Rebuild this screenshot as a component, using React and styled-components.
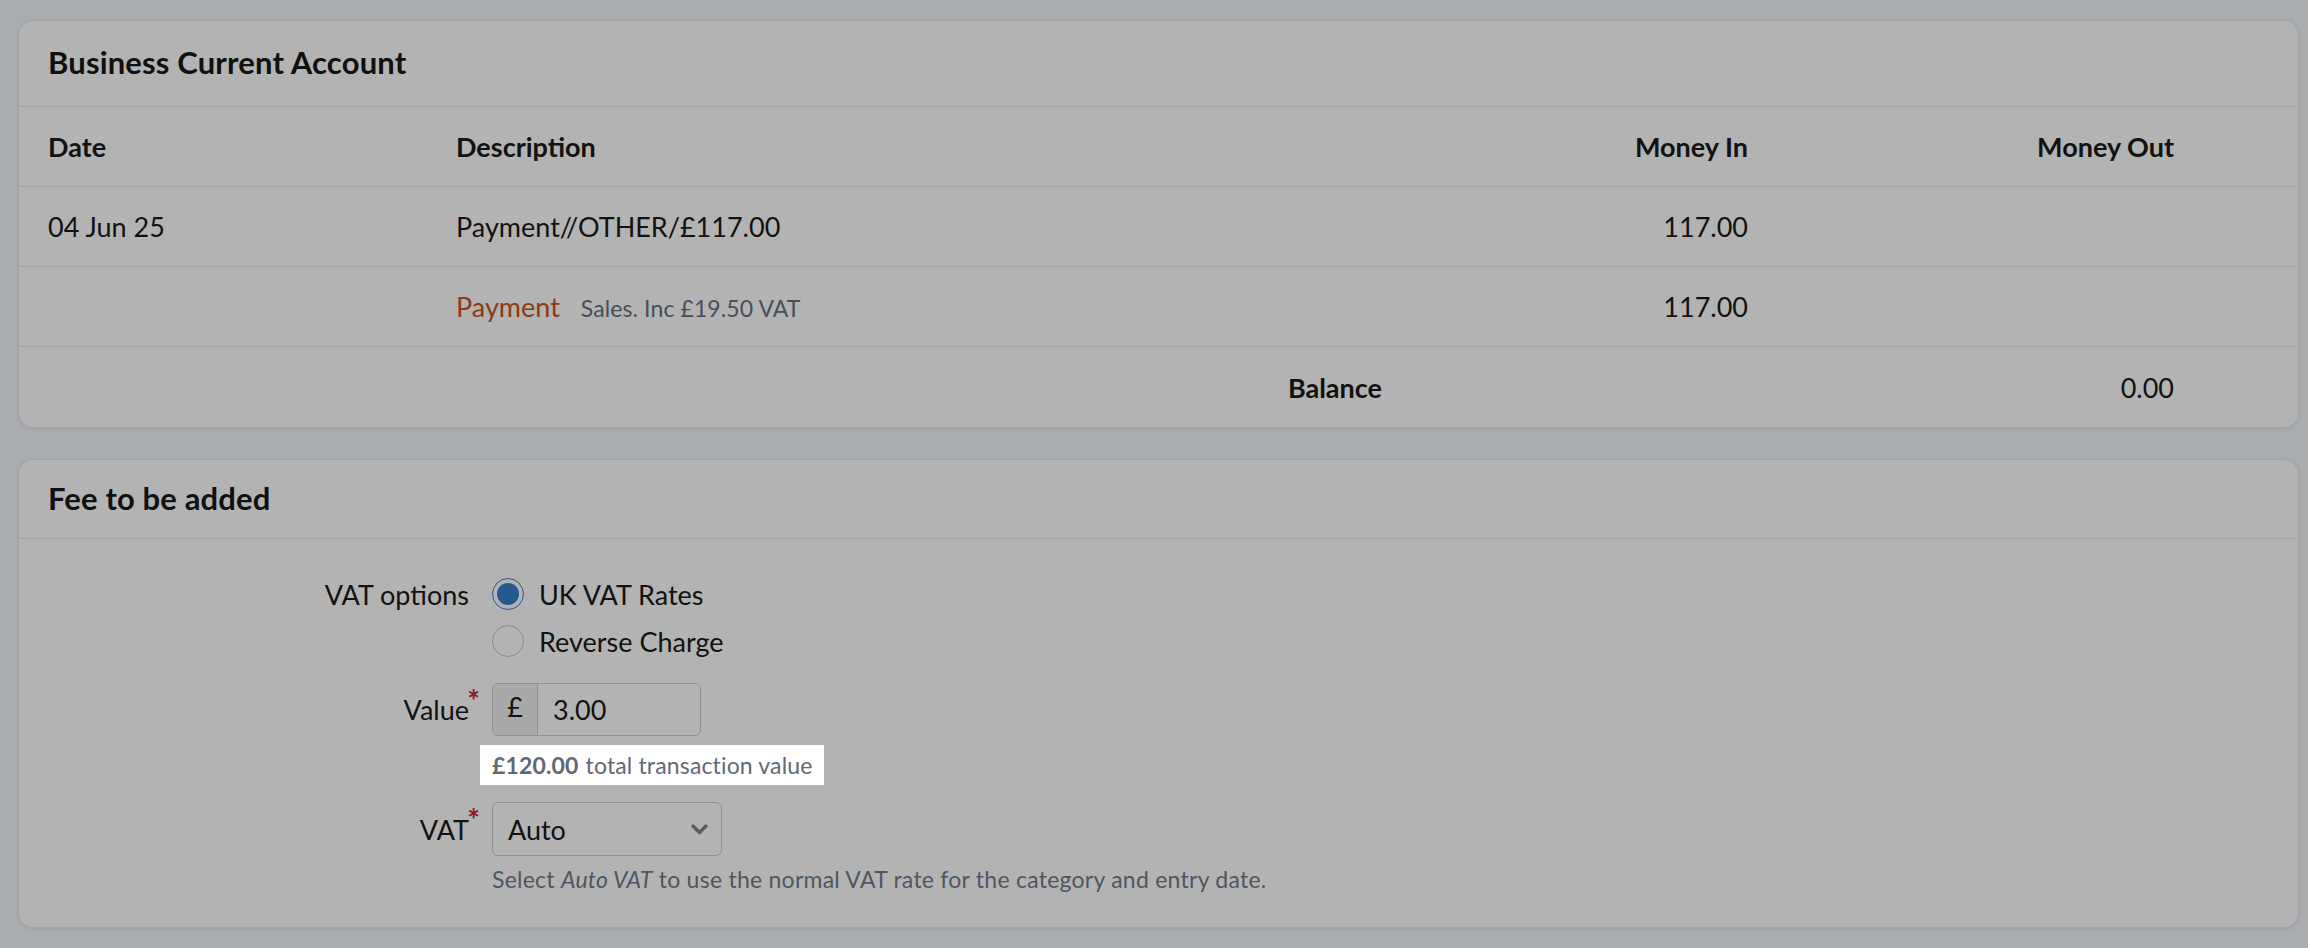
import React from "react";
import styled, { createGlobalStyle } from "styled-components";

const GlobalStyle = createGlobalStyle`
  * { box-sizing: border-box; }
  html, body { margin: 0; padding: 0; }
  body {
    background: #a9acb1;
    font-family: Lato, "Noto Sans", sans-serif;
    color: #121212;
    -webkit-font-smoothing: antialiased;
  }
`;

const Page = styled.div`
  padding: 20px 9px 20px 18px;
  display: flex;
  flex-direction: column;
  gap: 31px;
`;

const Card = styled.section`
  background: #b3b3b3;
  border: 1px solid #a4a5a7;
  border-radius: 15px;
  box-shadow: 0 1px 4px rgba(60, 64, 72, 0.12);
  overflow: hidden;
`;

const CardHeader = styled.header`
  height: ${(p) => p.$h}px;
  display: flex;
  align-items: center;
  padding: 0 29px ${(p) => p.$lift || 0}px 29px;
  border-bottom: 1px solid #a3a3a3;
`;

const CardTitle = styled.h2`
  margin: 0;
  font-size: 31px;
  font-weight: 700;
  color: #101010;
  letter-spacing: 0.15px;
`;

const Table = styled.div`
  display: grid;
  grid-template-columns: 408px 926px 366px 426px 1fr;
  padding-left: 29px;
`;

const Cell = styled.div`
  height: 80px;
  display: flex;
  align-items: center;
  justify-content: ${(p) => (p.$right ? "flex-end" : "flex-start")};
  font-size: 27px;
  font-weight: ${(p) => (p.$bold ? 700 : 400)};
  color: #121212;
  white-space: nowrap;
  border-bottom: ${(p) => (p.$last ? "none" : "1px solid #a3a3a3")};
  margin-left: ${(p) => (p.$first ? "-29px" : "0")};
  padding-left: ${(p) => (p.$first ? "29px" : "0")};
`;

const Line = styled.span`
  display: inline-flex;
  align-items: baseline;
`;

const LinkText = styled.span`
  color: #8a3c12;
  font-size: 27px;
`;

const Meta = styled.span`
  color: #47505a;
  font-size: 23px;
  letter-spacing: 0.1px;
  margin-left: 21px;
`;

const FormBody = styled.div`
  padding: 39px 0 33px 0;
  display: flex;
  flex-direction: column;
`;

const FormRow = styled.div`
  display: grid;
  grid-template-columns: 461px 1fr;
  column-gap: 12px;
  align-items: start;
  margin-top: ${(p) => p.$above || 0}px;
`;

const Label = styled.div`
  position: relative;
  height: ${(p) => p.$h}px;
  display: flex;
  align-items: center;
  justify-content: flex-end;
  padding-right: 11px;
  font-size: 27px;
  color: #121212;
`;

const Required = styled.span`
  position: absolute;
  right: 0;
  top: 2px;
  font-size: 30px;
  line-height: 1;
  font-weight: 700;
  color: #8b1b1b;
`;

const Control = styled.div`
  display: flex;
  flex-direction: column;
  align-items: flex-start;
`;

const RadioGroup = styled.div`
  display: flex;
  flex-direction: column;
  gap: 15px;
`;

const RadioOption = styled.label`
  height: 32px;
  display: flex;
  align-items: center;
  gap: 15px;
  font-size: 27px;
  color: #121212;
`;

const RadioCircle = styled.span`
  width: 32px;
  height: 32px;
  border-radius: 50%;
  border: 1.5px solid ${(p) => (p.$checked ? "#2b5d92" : "#898b8e")};
  display: flex;
  align-items: center;
  justify-content: center;
  flex: none;

  &::after {
    content: "";
    width: 22px;
    height: 22px;
    border-radius: 50%;
    background: ${(p) => (p.$checked ? "#245a90" : "transparent")};
  }
`;

const InputGroup = styled.div`
  display: flex;
  width: 209px;
  height: 53px;
  border: 1px solid #8f9092;
  border-radius: 6px;
  overflow: hidden;
`;

const Addon = styled.span`
  width: 45px;
  flex: none;
  display: flex;
  align-items: center;
  justify-content: center;
  padding-bottom: 6px;
  background: #a9a9a9;
  border-right: 1px solid #8f9092;
  font-size: 27px;
  color: #121212;
`;

const TextInput = styled.input`
  flex: 1;
  min-width: 0;
  border: none;
  outline: none;
  background: transparent;
  padding: 0 0 0 15px;
  font-family: Lato, "Noto Sans", sans-serif;
  font-size: 27px;
  color: #121212;
`;

const Highlight = styled.div`
  margin: 9px 0 0 -12px;
  height: 40px;
  padding: 0 11px 0 12px;
  display: flex;
  align-items: center;
  background: #ffffff;
  font-size: 23px;
  letter-spacing: 0.15px;
  color: #5f6a75;
  white-space: nowrap;

  strong {
    font-weight: 700;
    margin-right: 7px;
  }
`;

const Select = styled.div`
  width: 230px;
  height: 54px;
  border: 1px solid #8f9092;
  border-radius: 6px;
  display: flex;
  align-items: center;
  justify-content: space-between;
  padding: 0 13px 0 15px;
  font-size: 27px;
  color: #121212;
`;

const Help = styled.p`
  margin: 8px 0 0 0;
  font-size: 23px;
  line-height: 30px;
  letter-spacing: 0.25px;
  color: #4e5761;
  white-space: nowrap;

  em {
    font-style: italic;
  }
`;

const Chevron = () => (
  <svg width="17" height="11" viewBox="0 0 17 11" fill="none">
    <path d="M2 2 L8.5 8.5 L15 2" stroke="#585d62" strokeWidth="3.4" strokeLinecap="round" strokeLinejoin="round" />
  </svg>
);

export default function App() {
  return (
    <>
      <GlobalStyle />
      <Page>
        <Card>
          <CardHeader $h={86} $lift={4}>
            <CardTitle>Business Current Account</CardTitle>
          </CardHeader>
          <Table>
            <Cell $first $bold>Date</Cell>
            <Cell $bold>Description</Cell>
            <Cell $bold $right>Money In</Cell>
            <Cell $bold $right>Money Out</Cell>
            <Cell />

            <Cell $first>04 Jun 25</Cell>
            <Cell>Payment//OTHER/£117.00</Cell>
            <Cell $right>117.00</Cell>
            <Cell $right />
            <Cell />

            <Cell $first />
            <Cell>
              <Line>
                <LinkText>Payment</LinkText>
                <Meta>Sales. Inc £19.50 VAT</Meta>
              </Line>
            </Cell>
            <Cell $right>117.00</Cell>
            <Cell $right />
            <Cell />

            <Cell $first $last />
            <Cell $last $right $bold>Balance</Cell>
            <Cell $last />
            <Cell $last $right>0.00</Cell>
            <Cell $last />
          </Table>
        </Card>

        <Card>
          <CardHeader $h={79} $lift={2}>
            <CardTitle>Fee to be added</CardTitle>
          </CardHeader>
          <FormBody>
            <FormRow>
              <Label $h={32}>VAT options</Label>
              <Control>
                <RadioGroup>
                  <RadioOption>
                    <RadioCircle $checked />
                    UK VAT Rates
                  </RadioOption>
                  <RadioOption>
                    <RadioCircle />
                    Reverse Charge
                  </RadioOption>
                </RadioGroup>
              </Control>
            </FormRow>

            <FormRow $above={26}>
              <Label $h={53}>
                Value<Required>*</Required>
              </Label>
              <Control>
                <InputGroup>
                  <Addon>£</Addon>
                  <TextInput readOnly value="3.00" />
                </InputGroup>
                <Highlight>
                  <strong>£120.00</strong> total transaction value
                </Highlight>
              </Control>
            </FormRow>

            <FormRow $above={17}>
              <Label $h={54}>
                VAT<Required>*</Required>
              </Label>
              <Control>
                <Select>
                  <span>Auto</span>
                  <Chevron />
                </Select>
                <Help>
                  Select <em>Auto VAT</em> to use the normal VAT rate for the category and entry date.
                </Help>
              </Control>
            </FormRow>
          </FormBody>
        </Card>
      </Page>
    </>
  );
}
